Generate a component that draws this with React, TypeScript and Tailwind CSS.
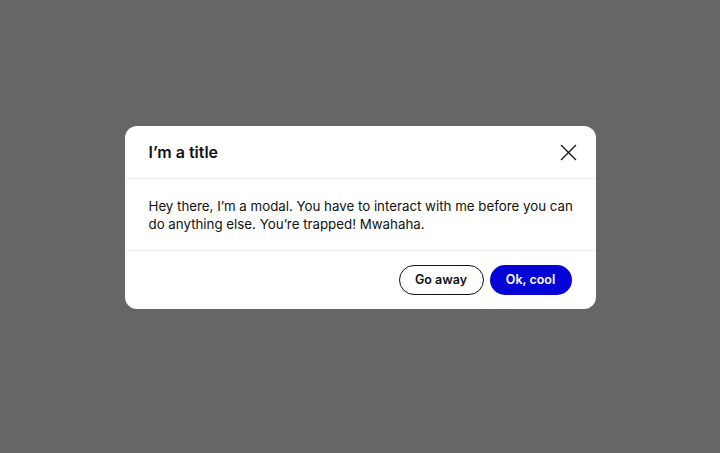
import React from "react";

const App: React.FC = () => (
  <div
    className="w-[720px] h-[453px] bg-[#666666] flex items-center justify-center"
    style={{ fontFamily: "Inter, 'Noto Sans', sans-serif" }}
  >
    <div className="w-[471px] bg-white rounded-[12px] overflow-hidden -mt-[18px]">
      <div className="h-[53px] flex items-center justify-between pl-6 pr-[17px] border-b border-[#ececec]">
        <h2 className="text-[16px] font-semibold text-[#111]">I’m a title</h2>
        <button className="w-5 h-5 flex items-center justify-center">
          <svg width="17" height="17" viewBox="0 0 17 17" fill="none">
            <path d="M1 1L16 16M16 1L1 16" stroke="#111" strokeWidth="1.3" />
          </svg>
        </button>
      </div>
      <div className="h-[72px] pl-6 pr-5 flex items-center border-b border-[#ececec]">
        <p className="text-[13.3px] leading-[18px] text-[#111]">
          Hey there, I’m a modal. You have to interact with me before you can do anything else. You’re trapped! Mwahaha.
        </p>
      </div>
      <div className="h-[58px] px-6 flex items-center justify-end gap-[6px]">
        <button className="h-[30px] w-[85px] rounded-full border border-[#111] text-[12.5px] font-semibold text-[#111]">
          Go away
        </button>
        <button className="h-[30px] w-[82px] rounded-full bg-[#0404d6] text-[12.5px] font-semibold text-white">
          Ok, cool
        </button>
      </div>
    </div>
  </div>
);

export default App;
